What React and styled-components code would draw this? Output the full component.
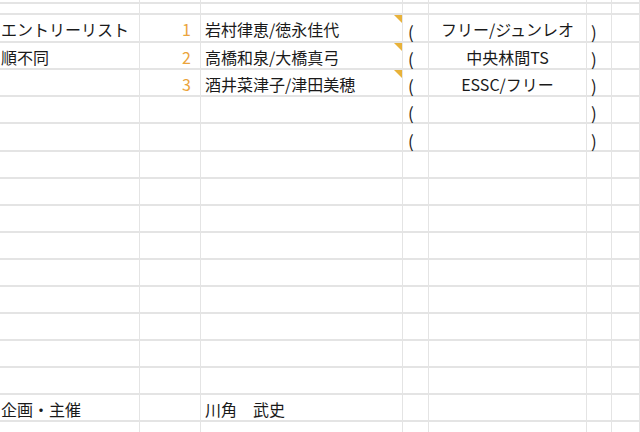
import React from "react";
import styled, { createGlobalStyle } from "styled-components";

const GlobalStyle = createGlobalStyle`
  html, body {
    margin: 0;
    padding: 0;
    background: #ffffff;
  }
  body {
    font-family: "Noto Sans CJK JP", "Noto Sans", sans-serif;
    color: #1a1a1a;
    overflow: hidden;
  }
`;

const Sheet = styled.div`
  display: grid;
  grid-template-columns: 140px 61px 202px 26px 158px 25px 1fr;
  grid-template-rows: 4px 11px 28px 27px 27px 27px 28px;
  grid-auto-rows: 27px;
  width: 640px;
  height: 432px;
  overflow: hidden;
`;

const Cell = styled.div`
  position: relative;
  box-sizing: border-box;
  border-right: 1px solid #e4e4e4;
  border-bottom: 2px solid #e4e4e4;
  display: flex;
  align-items: center;
  justify-content: ${(p) =>
    p.$align === "right" ? "flex-end" : p.$align === "center" ? "center" : "flex-start"};
  padding: 2px ${(p) => (p.$align === "right" ? "9px" : "0")} 0 ${(p) => p.$pad || "0"};
  font-size: 16px;
  line-height: 1;
  white-space: nowrap;
  color: ${(p) => p.$color || "#1a1a1a"};
`;

const Note = styled.span`
  position: absolute;
  top: 0;
  right: 0;
  width: 0;
  height: 0;
  border-top: 8px solid #e8b23a;
  border-left: 8px solid transparent;
`;

const Paren = styled.span`
  display: inline-block;
  transform: translateY(2px);
  font-size: 17px;
`;

const entries = [
  { no: "1", names: "岩村律恵/徳永佳代", club: "フリー/ジュンレオ", note: true },
  { no: "2", names: "高橋和泉/大橋真弓", club: "中央林間TS", note: true },
  { no: "3", names: "酒井菜津子/津田美穂", club: "ESSC/フリー", note: true },
  { no: "", names: "", club: "", note: false, paren: true },
  { no: "", names: "", club: "", note: false, paren: true },
];

const sideLabels = ["エントリーリスト", "順不同"];

function Row({ label, no, names, club, note, paren, host }) {
  return (
    <>
      <Cell $pad="1px">{label}</Cell>
      <Cell $align="right" $color="#eba43c">{no}</Cell>
      <Cell $pad="4px">
        {names || host}
        {note && <Note />}
      </Cell>
      <Cell $pad="5px">{paren && <Paren>(</Paren>}</Cell>
      <Cell $align="center">{club}</Cell>
      <Cell $pad="4px">{paren && <Paren>)</Paren>}</Cell>
      <Cell />
    </>
  );
}

export default function App() {
  const rows = [];
  // thin rows at the very top
  for (let r = 0; r < 2; r++) {
    rows.push(<Row key={"top" + r} />);
  }
  entries.forEach((e, i) => {
    rows.push(<Row key={"e" + i} label={sideLabels[i]} paren={!!e.no || e.paren} {...e} />);
  });
  for (let r = 0; r < 9; r++) {
    rows.push(<Row key={"blank" + r} />);
  }
  rows.push(<Row key="host" label="企画・主催" host="川角　武史" />);
  rows.push(<Row key="last" />);

  return (
    <>
      <GlobalStyle />
      <Sheet>{rows}</Sheet>
    </>
  );
}
